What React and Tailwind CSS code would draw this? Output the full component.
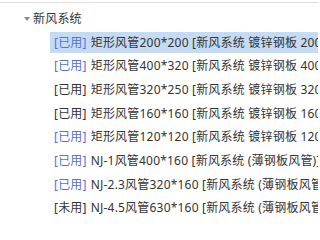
const rows = [
  { tag: '[已用]', blue: true, text: '矩形风管200*200 [新风系统 镀锌钢板 200*200]', selected: true },
  { tag: '[已用]', blue: true, text: '矩形风管400*320 [新风系统 镀锌钢板 400*320]' },
  { tag: '[已用]', blue: false, text: '矩形风管320*250 [新风系统 镀锌钢板 320*250]' },
  { tag: '[已用]', blue: false, text: '矩形风管160*160 [新风系统 镀锌钢板 160*160]' },
  { tag: '[已用]', blue: true, text: '矩形风管120*120 [新风系统 镀锌钢板 120*120]' },
  { tag: '[已用]', blue: true, text: 'NJ-1风管400*160 [新风系统 (薄钢板风管)]' },
  { tag: '[已用]', blue: true, text: 'NJ-2.3风管320*160 [新风系统 (薄钢板风管)]' },
  { tag: '[未用]', blue: false, text: 'NJ-4.5风管630*160 [新风系统 (薄钢板风管)]' },
]

const App = () => {
  return (
    <div
      className="h-[227px] w-[318px] overflow-hidden bg-white text-[12px] tracking-[0.2px] text-[#333333]"
      style={{ fontFamily: '"Noto Sans", "Noto Sans CJK SC", sans-serif' }}
    >
      <div className="mt-[2px] h-px w-full bg-[#dcdcdc]" />
      <div className="pt-[4px]">
        <div className="flex h-[23.7px] items-center pl-[24px]">
          <svg width="6" height="4" viewBox="0 0 6 4" className="mr-[3px]">
            <path d="M0 0 L6 0 L3 4 Z" fill="#8a8a8a" />
          </svg>
          <span className="whitespace-nowrap leading-none">新风系统</span>
        </div>
        <ul>
          {rows.map((row, i) => (
            <li key={i} className="flex h-[23.7px] items-center pl-[50px]">
              <div
                className={`flex h-[21px] min-w-0 flex-1 items-center overflow-hidden whitespace-nowrap pl-[4px] ${
                  row.selected ? 'bg-[#c5dbf3]' : ''
                }`}
              >
                <span className={row.blue ? 'text-[#5670d8]' : 'text-[#333333]'}>{row.tag}</span>
                <span className="ml-[4px]">{row.text}</span>
              </div>
            </li>
          ))}
        </ul>
      </div>
    </div>
  )
}

export default App
